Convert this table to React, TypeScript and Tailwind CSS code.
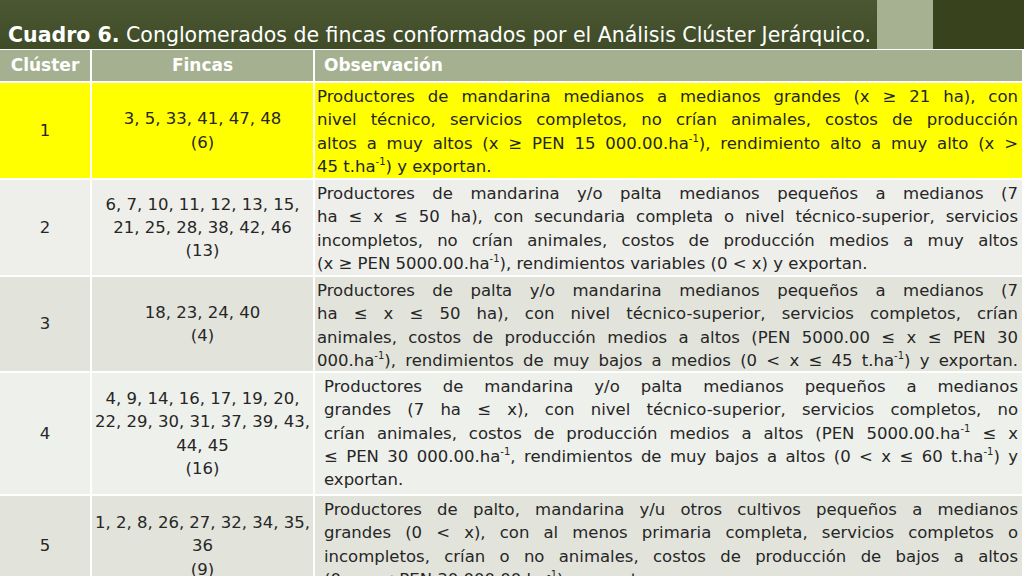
import React from 'react';

type Line = { t: React.ReactNode; j?: boolean };

const sup = <sup className="text-[10px] relative -top-[7px]">-1</sup>;

const rows: {
  n: string;
  fincas: string[];
  bg: string;
  pl: string;
  obs: Line[];
}[] = [
  {
    n: '1',
    fincas: ['3, 5, 33, 41, 47, 48', '(6)'],
    bg: 'bg-[#ffff00]',
    pl: 'pl-[2px]',
    obs: [
      { t: 'Productores de mandarina medianos a medianos grandes (x ≥ 21 ha), con', j: true },
      { t: 'nivel técnico, servicios completos, no crían animales, costos de producción', j: true },
      { t: <>altos a muy altos (x ≥ PEN 15 000.00.ha{sup}), rendimiento alto a muy alto (x &gt;</>, j: true },
      { t: <>45 t.ha{sup}) y exportan.</> },
    ],
  },
  {
    n: '2',
    fincas: ['6, 7, 10, 11, 12, 13, 15,', '21, 25, 28, 38, 42, 46', '(13)'],
    bg: 'bg-[#eeefea]',
    pl: 'pl-[2px]',
    obs: [
      { t: 'Productores de mandarina y/o palta medianos pequeños a medianos (7', j: true },
      { t: 'ha ≤ x ≤ 50 ha), con secundaria completa o nivel técnico-superior, servicios', j: true },
      { t: 'incompletos, no crían animales, costos de producción medios a muy altos', j: true },
      { t: <>(x ≥ PEN 5000.00.ha{sup}), rendimientos variables (0 &lt; x) y exportan.</> },
    ],
  },
  {
    n: '3',
    fincas: ['18, 23, 24, 40', '(4)'],
    bg: 'bg-[#e2e4dc]',
    pl: 'pl-[2px]',
    obs: [
      { t: 'Productores de palta y/o mandarina medianos pequeños a medianos (7', j: true },
      { t: 'ha ≤ x ≤ 50 ha), con nivel técnico-superior, servicios completos, crían', j: true },
      { t: 'animales, costos de producción medios a altos (PEN 5000.00 ≤ x ≤ PEN 30', j: true },
      { t: <>000.ha{sup}), rendimientos de muy bajos a medios (0 &lt; x ≤ 45 t.ha{sup}) y exportan.</>, j: true },
    ],
  },
  {
    n: '4',
    fincas: ['4, 9, 14, 16, 17, 19, 20,', '22, 29, 30, 31, 37, 39, 43,', '44, 45', '(16)'],
    bg: 'bg-[#eef0eb]',
    pl: 'pl-[9px]',
    obs: [
      { t: 'Productores de mandarina y/o palta medianos pequeños a medianos', j: true },
      { t: 'grandes (7 ha ≤ x), con nivel técnico-superior, servicios completos, no', j: true },
      { t: <>crían animales, costos de producción medios a altos (PEN 5000.00.ha{sup} ≤ x</>, j: true },
      { t: <>≤ PEN 30 000.00.ha{sup}, rendimientos de muy bajos a altos (0 &lt; x ≤ 60 t.ha{sup}) y</>, j: true },
      { t: 'exportan.' },
    ],
  },
  {
    n: '5',
    fincas: ['1, 2, 8, 26, 27, 32, 34, 35,', '36', '(9)'],
    bg: 'bg-[#e2e4dc]',
    pl: 'pl-[9px]',
    obs: [
      { t: 'Productores de palto, mandarina y/u otros cultivos pequeños a medianos', j: true },
      { t: 'grandes (0 < x), con al menos primaria completa, servicios completos o', j: true },
      { t: 'incompletos, crían o no animales, costos de producción de bajos a altos', j: true },
      { t: <>(0 &lt; x ≤ PEN 30 000.00.ha{sup}) y exportan.</> },
    ],
  },
];

const heights = ['h-[95px]', 'h-[95px]', 'h-[94px]', 'h-[121px]', 'h-[100px]'];

export default function App() {
  return (
    <div
      className="w-[1024px] h-[576px] overflow-hidden bg-[#3a4722] bg-[radial-gradient(ellipse_at_68%_20%,#4b5f3e_0%,#3f4f2a_35%,#37421f_75%)] font-['DejaVu_Sans',sans-serif]"
    >
      {/* title bar */}
      <div className="flex h-[49px]">
        <div className="w-[877px] flex items-end pl-[8px] pb-[1px] bg-[linear-gradient(180deg,#4a5732_0%,#3f4c27_100%)]">
          <h1 className="text-white text-[20.5px] leading-[26px] whitespace-nowrap">
            <span className="font-bold">Cuadro 6.</span> Conglomerados de fincas conformados por el Análisis Clúster Jerárquico.
          </h1>
        </div>
        <div className="w-[56px] bg-[#a5b190]" />
        <div className="flex-1 bg-[#38421d]" />
      </div>

      {/* table */}
      <div className="bg-white pt-[1px] pr-[2px] flex flex-col gap-[2px] text-[#262626] text-[16.5px] leading-[23.3px]">
        <div className="flex gap-[2px] h-[31px] bg-white text-[17px]">
          <div className="w-[90px] bg-[#a4b08f] text-white font-bold flex items-center justify-center">Clúster</div>
          <div className="w-[221px] bg-[#a4b08f] text-white font-bold flex items-center justify-center">Fincas</div>
          <div className="flex-1 bg-[#a4b08f] text-white font-bold flex items-center pl-[9px]">Observación</div>
        </div>
        {rows.map((r, i) => (
          <div key={r.n} className={`flex gap-[2px] ${heights[i]}`}>
            <div className={`w-[90px] ${r.bg} flex items-center justify-center`}>{r.n}</div>
            <div className={`w-[221px] ${r.bg} flex flex-col items-center justify-center text-center`}>
              {r.fincas.map((f) => (
                <div key={f}>{f}</div>
              ))}
            </div>
            <div className={`flex-1 ${r.bg} ${r.pl} pr-[4px] pt-[2px]`}>
              {r.obs.map((l, k) => (
                <div key={k} className={l.j ? 'text-justify [text-align-last:justify]' : 'text-left'}>
                  {l.t}
                </div>
              ))}
            </div>
          </div>
        ))}
      </div>
    </div>
  );
}
